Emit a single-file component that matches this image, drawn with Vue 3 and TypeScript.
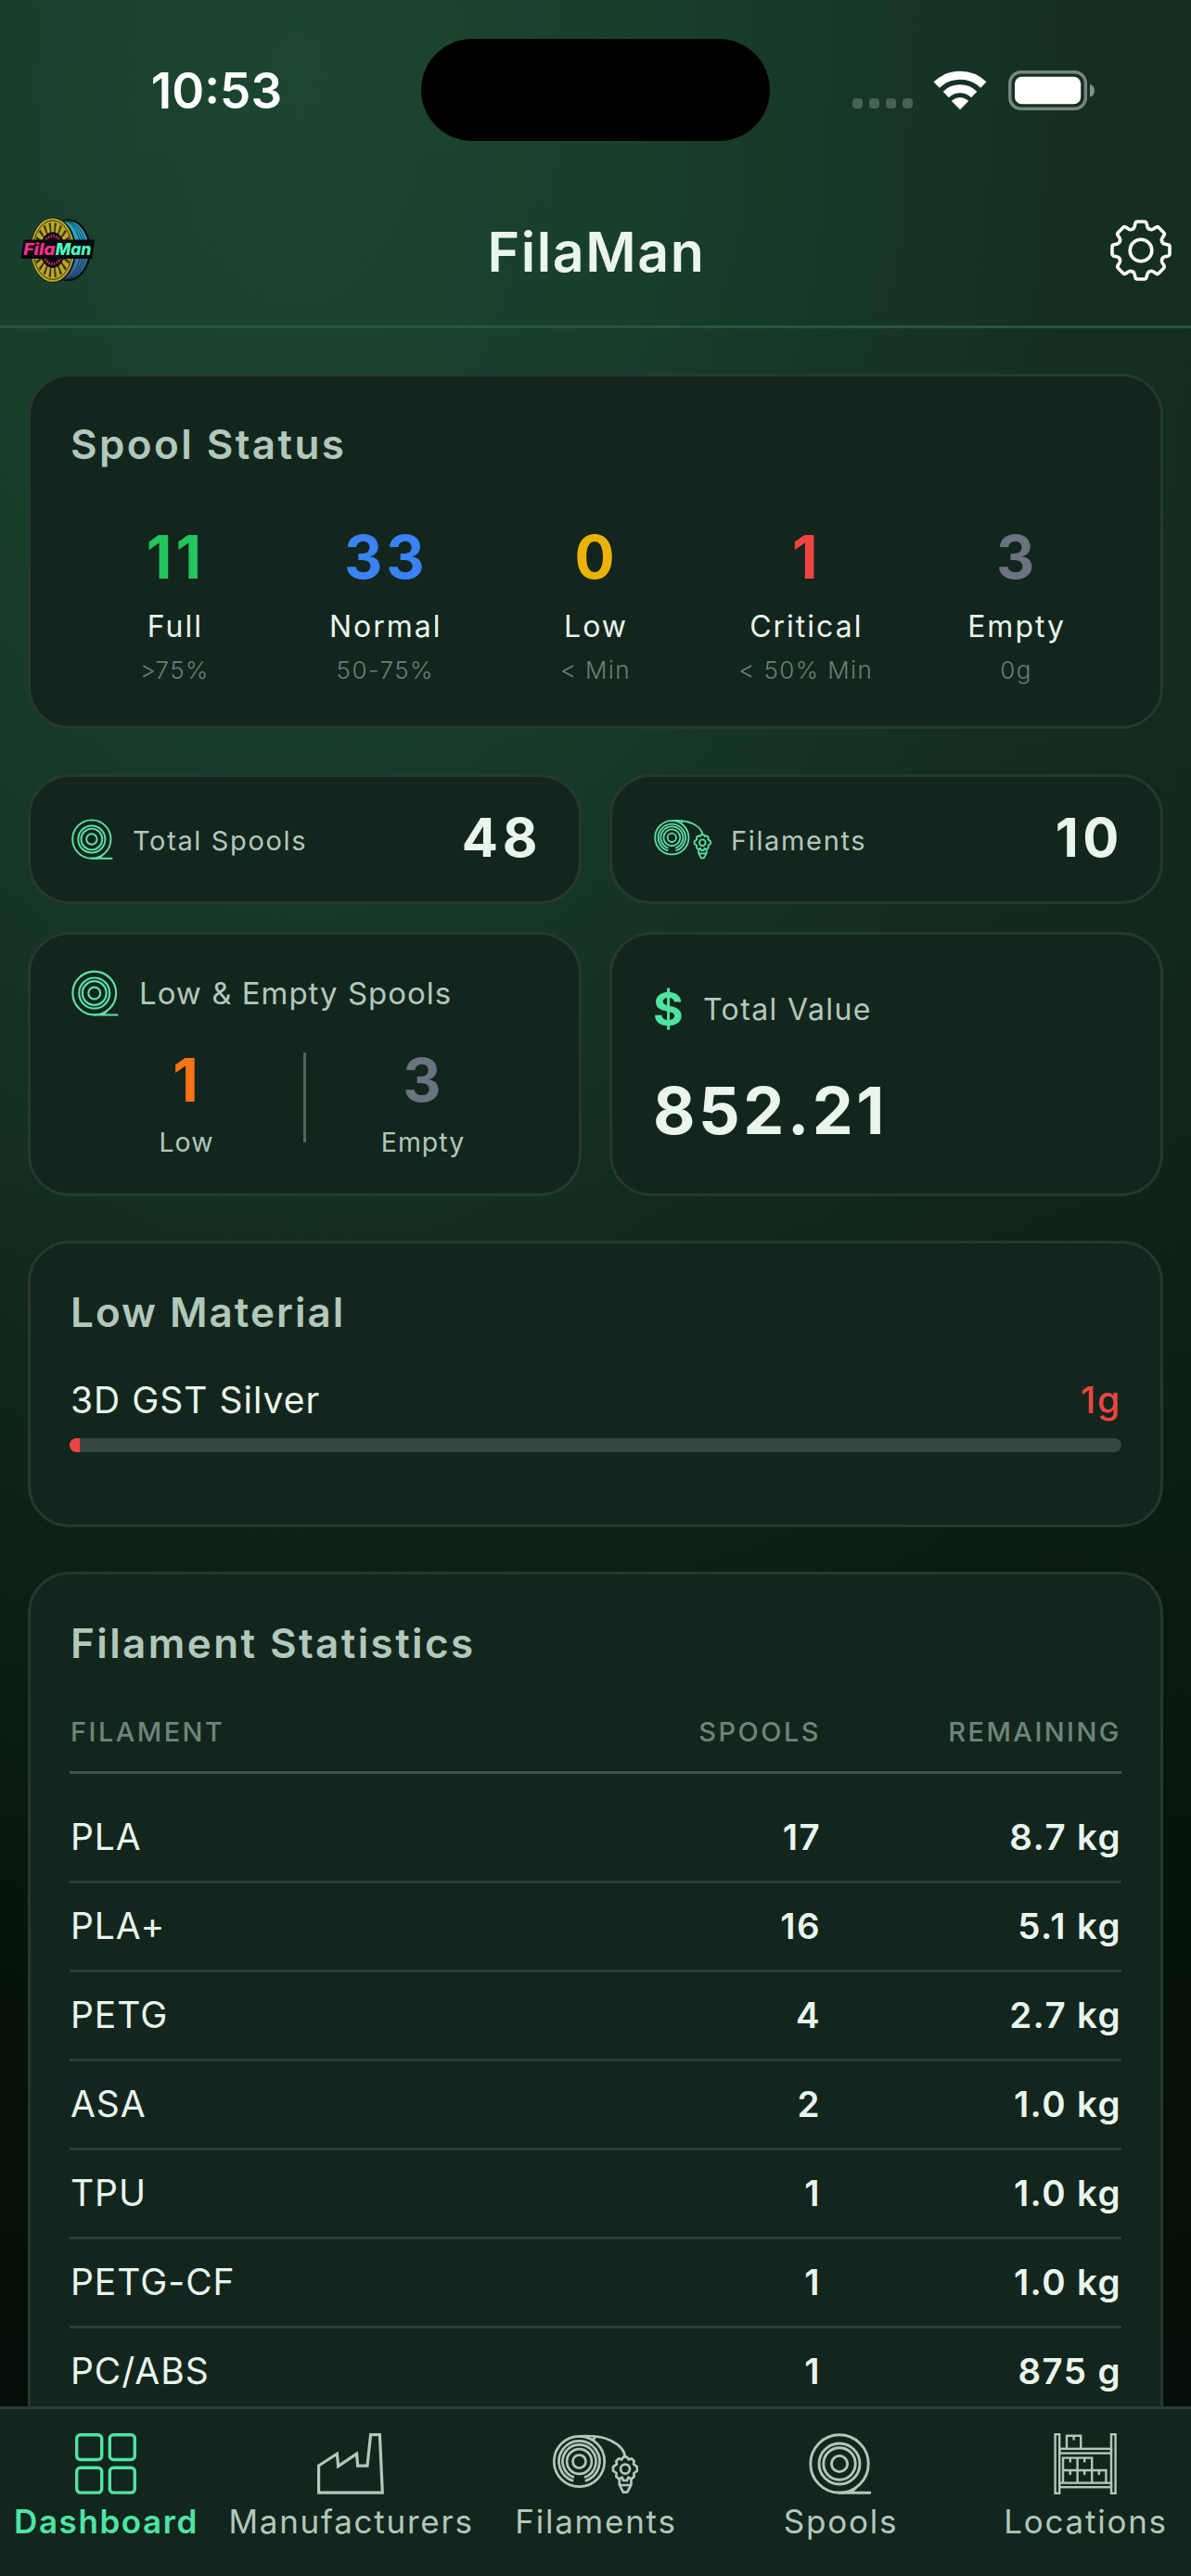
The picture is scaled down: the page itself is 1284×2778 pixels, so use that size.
<script setup lang="ts">
interface Status { value: number; label: string; hint: string; color: string }
interface Row { name: string; spools: number; remaining: string }

const statuses: Status[] = [
  { value: 11, label: 'Full', hint: '>75%', color: '#22c55e' },
  { value: 33, label: 'Normal', hint: '50-75%', color: '#3b82f6' },
  { value: 0, label: 'Low', hint: '< Min', color: '#eab308' },
  { value: 1, label: 'Critical', hint: '< 50% Min', color: '#ef4444' },
  { value: 3, label: 'Empty', hint: '0g', color: '#6b7280' },
]

const rows: Row[] = [
  { name: 'PLA', spools: 17, remaining: '8.7 kg' },
  { name: 'PLA+', spools: 16, remaining: '5.1 kg' },
  { name: 'PETG', spools: 4, remaining: '2.7 kg' },
  { name: 'ASA', spools: 2, remaining: '1.0 kg' },
  { name: 'TPU', spools: 1, remaining: '1.0 kg' },
  { name: 'PETG-CF', spools: 1, remaining: '1.0 kg' },
  { name: 'PC/ABS', spools: 1, remaining: '875 g' },
]

const tabs = [
  { label: 'Dashboard', icon: 'i-grid', w: 66, active: true },
  { label: 'Manufacturers', icon: 'i-factory', w: 72, active: false },
  { label: 'Filaments', icon: 'i-filament', w: 92, active: false },
  { label: 'Spools', icon: 'i-spool', w: 68, active: false },
  { label: 'Locations', icon: 'i-shelf', w: 68, active: false },
]

// Wedge-shaped windows around the spool flange of the logo.
const wedges = Array.from({ length: 20 }, (_, i) => i * 18)
const teeth = Array.from({ length: 8 }, (_, i) => i * 45)
</script>

<template>
  <div class="screen">
    <svg class="defs" width="0" height="0">
      <symbol id="i-grid" viewBox="0 0 66 66">
        <g fill="none" stroke="currentColor" stroke-width="3.4">
          <rect x="1.7" y="1.7" width="27" height="26.8" rx="4" />
          <rect x="37.3" y="1.7" width="27" height="26.8" rx="4" />
          <rect x="1.7" y="37.3" width="27" height="26.8" rx="4" />
          <rect x="37.3" y="37.3" width="27" height="26.8" rx="4" />
        </g>
      </symbol>
      <symbol id="i-factory" viewBox="0 0 72 66">
        <path d="M1.6 35 L21.4 22.2 L22.6 35.6 L42.6 22.2 L43.6 35.2 H54 L57.6 1.7 H67.4 L70.3 64.2 H1.6 Z" fill="none" stroke="currentColor" stroke-width="3.2" />
      </symbol>
      <symbol id="i-filament" viewBox="0 0 92 66">
        <g fill="none" stroke="currentColor" stroke-width="2.7">
          <circle cx="28.5" cy="30.5" r="27.2" />
          <path d="M22.2 51.5 A22 22 0 1 1 34.8 51.5" />
          <path d="M23 47.6 A18 18 0 1 1 34 47.6" />
          <circle cx="28.5" cy="30.5" r="13.4" />
          <circle cx="28.5" cy="30.5" r="7" />
          <path d="M28.5 3.3 C42 2.4 54 3.6 63 8.2 C72 12.6 77.4 18.5 78 26" />
          <path d="M46 4.2 Q44 5.6 43.2 7.4" />
          <circle cx="78" cy="38.6" r="5" />
          <path stroke-linejoin="round" d="M76 25.6 H80 L81.6 28.4 L85 27.4 L87.6 30 L87 33.4 L91 36.4 V40.6 L87.4 43 L87.6 47 L84.6 49.4 L81.4 47.6 L80 51 H76 L74.6 47.6 L71.4 49.4 L68.4 47 L68.6 43 L65 40.6 V36.4 L69 33.4 L68.4 30 L71 27.4 L74.4 28.4 Z" />
          <path stroke-linejoin="round" d="M71.8 49 V56 H84.4 V49 M72 56 L75.8 63.6 H80.2 L84.2 56" />
        </g>
      </symbol>
      <symbol id="i-spool" viewBox="0 0 68 66">
        <g fill="none" stroke="currentColor" stroke-width="2.9">
          <circle cx="33" cy="33" r="31.2" />
          <circle cx="33" cy="33" r="22" />
          <circle cx="33" cy="33" r="17.2" />
          <circle cx="33" cy="33" r="8.6" />
          <path d="M32 64.3 H67 M45 63.6 Q49 61 51 58.4" />
        </g>
      </symbol>
      <symbol id="i-shelf" viewBox="0 0 68 66">
        <g fill="none" stroke="currentColor" stroke-width="2.4">
          <rect x="1.6" y="1.2" width="4.6" height="63.6" />
          <rect x="62" y="1.2" width="4.6" height="63.6" />
          <rect x="6.2" y="16.8" width="55.8" height="4.8" />
          <rect x="6.2" y="53.6" width="55.8" height="4.6" />
          <path d="M14 16.8 V2.8 H29.2 V16.8 M21.6 2.8 V7.4" />
          <path d="M10 53.6 V26.6 H41.2 V53.6 M25.6 26.6 V53.6 M10 40 H56.4 V53.6" />
          <path d="M17.8 26.6 V31.4 M33.2 26.6 V31.4 M17.8 40 V45 M33.2 40 V45 M48.8 40 V45" />
        </g>
      </symbol>
    </svg>

    <div class="statusbar">
      <div class="time">10:53</div>
      <div class="island"></div>
      <div class="indicators">
        <div class="dots"><i></i><i></i><i></i><i></i></div>
        <svg class="wifi" width="58" height="43" viewBox="0 0 58 43">
          <g fill="none" stroke="#fff" stroke-width="9">
            <path d="M3.6 15.6 A36.5 36.5 0 0 1 54.4 15.6" />
            <path d="M13.8 25.9 A22 22 0 0 1 44.2 25.9" />
          </g>
          <path d="M29 42.3 L20.4 33.6 Q19.8 32.6 20.8 31.9 Q29 26.2 37.2 31.9 Q38.2 32.6 37.6 33.6 Z" fill="#fff" />
        </svg>
        <svg class="battery" width="94" height="43" viewBox="0 0 94 43">
          <rect x="1.8" y="1.8" width="81.6" height="39.4" rx="12" fill="none" stroke="#fff" stroke-opacity=".42" stroke-width="3.4" />
          <rect x="7" y="6.8" width="71.2" height="29.4" rx="7.5" fill="#fff" />
          <path d="M88 14.6 A7.6 7.6 0 0 1 88 28.8 Z" fill="#fff" fill-opacity=".48" />
        </svg>
      </div>
    </div>

    <header class="header">
      <svg class="logo" width="82" height="76" viewBox="0 0 82 76">
        <defs>
          <linearGradient id="side" x1="0" y1="0" x2="0" y2="1">
            <stop offset="0" stop-color="#27b3cf" />
            <stop offset=".5" stop-color="#2b8fb4" />
            <stop offset="1" stop-color="#3b4f96" />
          </linearGradient>
        </defs>
        <ellipse cx="51.5" cy="37.6" rx="24.5" ry="33.6" fill="#07110d" />
        <ellipse cx="51" cy="37.6" rx="22.6" ry="31.4" fill="url(#side)" />
        <g fill="none" stroke="#12333f" stroke-width=".9">
          <ellipse cx="48.6" cy="37.6" rx="22" ry="31.5" />
          <ellipse cx="45.8" cy="37.6" rx="22" ry="32" />
          <ellipse cx="43" cy="37.6" rx="22" ry="32.4" />
        </g>
        <ellipse cx="35.4" cy="37.6" rx="24.6" ry="35.4" fill="#0b130c" />
        <ellipse cx="34.8" cy="37.6" rx="23.4" ry="34.4" fill="#b9a62c" />
        <ellipse cx="34.8" cy="37.6" rx="21" ry="31.8" fill="none" stroke="#38350f" stroke-width="1" />
        <g transform="translate(34.8 37.6) scale(.68 1)">
          <path v-for="a in wedges" :key="a" :transform="`rotate(${a + 9})`" d="M-1.7 -29.5 H1.7 L1 -18 H-1 Z" fill="#3a360e" />
        </g>
        <ellipse cx="34.8" cy="37.6" rx="13.6" ry="19.4" fill="#0d0b10" />
        <ellipse cx="34.8" cy="37.6" rx="10.6" ry="15" fill="none" stroke="#c9246f" stroke-width="3" stroke-dasharray="1.6 1.3" />
        <path d="M4.6 27.6 H79 L76.4 46 H1.6 Z" fill="#07090c" stroke="#07090c" stroke-width="2" stroke-linejoin="round" />
        <text x="3.2" y="43" textLength="34.4" lengthAdjust="spacingAndGlyphs" class="logo-text" fill="#ff2f8e">Fila</text>
        <text x="37.8" y="43" textLength="38.6" lengthAdjust="spacingAndGlyphs" class="logo-text" fill="#4dfcc0">Man</text>
      </svg>
      <h1>FilaMan</h1>
      <svg class="gear" width="68" height="68" viewBox="-34 -34 68 68">
        <g fill="none" stroke="#fff" stroke-width="3.6" stroke-linecap="round" stroke-linejoin="round">
          <circle r="11.8" />
          <path
            v-for="a in teeth"
            :key="a"
            :transform="`rotate(${a})`"
            d="M-9.5 -22.8 Q-7.4 -23.4 -7 -25.2 L-5.9 -29.6 Q-5.5 -31 -4 -31 H4 Q5.5 -31 5.9 -29.6 L7 -25.2 Q7.4 -23.4 9.4 -22.84"
          />
        </g>
      </svg>
    </header>

    <main class="content">
      <section class="card status">
        <h2>Spool Status</h2>
        <div class="status-grid">
          <div v-for="s in statuses" :key="s.label" class="status-cell">
            <div class="big" :style="{ color: s.color }">{{ s.value }}</div>
            <div class="label">{{ s.label }}</div>
            <div class="hint">{{ s.hint }}</div>
          </div>
        </div>
      </section>

      <div class="tiles">
        <section class="card tile">
          <svg width="45" height="44"><use href="#i-spool" /></svg>
          <span class="tile-label">Total Spools</span>
          <strong>48</strong>
        </section>
        <section class="card tile filaments">
          <svg width="62" height="44"><use href="#i-filament" /></svg>
          <span class="tile-label">Filaments</span>
          <strong>10</strong>
        </section>
        <section class="card lowempty">
          <div class="le-head">
            <svg width="51" height="50"><use href="#i-spool" /></svg>
            <span>Low &amp; Empty Spools</span>
          </div>
          <div class="le-body">
            <div class="le-cell">
              <div class="big orange">1</div>
              <div class="le-label">Low</div>
            </div>
            <div class="vline"></div>
            <div class="le-cell">
              <div class="big gray">3</div>
              <div class="le-label">Empty</div>
            </div>
          </div>
        </section>
        <section class="card value">
          <div class="v-head"><b>$</b><span>Total Value</span></div>
          <div class="amount">852.21</div>
        </section>
      </div>

      <section class="card lowmat">
        <h2>Low Material</h2>
        <div class="lm-row"><span>3D GST Silver</span><b>1g</b></div>
        <div class="bar"><div class="fill" :style="{ width: '1%' }"></div></div>
      </section>

      <section class="card stats">
        <h2>Filament Statistics</h2>
        <div class="thead">
          <span>FILAMENT</span><span class="num">SPOOLS</span><span class="num">REMAINING</span>
        </div>
        <div v-for="r in rows" :key="r.name" class="trow">
          <span>{{ r.name }}</span><b class="num">{{ r.spools }}</b><b class="num">{{ r.remaining }}</b>
        </div>
      </section>
    </main>

    <nav class="tabbar">
      <div v-for="t in tabs" :key="t.label" class="tab" :class="{ active: t.active }">
        <svg :width="t.w" height="66"><use :href="`#${t.icon}`" /></svg>
        <span>{{ t.label }}</span>
      </div>
    </nav>
  </div>
</template>

<style>
body {
  background: #050d08;
}
</style>

<style scoped>
.screen {
  width: 1284px;
  height: 2778px;
  overflow: hidden;
  display: flex;
  flex-direction: column;
  font-family: Inter, "Liberation Sans", sans-serif;
  color: #eaf5ee;
  background:
    radial-gradient(ellipse 1200px 2150px at 25% 3%, rgba(34, 90, 62, 0.58) 0%, rgba(30, 82, 56, 0.48) 35%, rgba(22, 60, 40, 0.24) 70%, rgba(16, 46, 30, 0) 100%),
    linear-gradient(180deg, #142b1e 0%, #12291c 28%, #10231a 45%, #0b1c12 60%, #06130b 75%, #050d08 100%);
}
.screen * {
  box-sizing: border-box;
}
.screen svg {
  flex: none;
  display: block;
}
.defs {
  position: absolute;
}

.statusbar {
  flex: none;
  height: 194px;
  display: grid;
  grid-template-columns: 454px 376px 454px;
  align-items: center;
}
.time {
  padding: 2px 0 0 13px;
  text-align: center;
  font-size: 53px;
  line-height: 60px;
  font-weight: 600;
  color: #fff;
}
.island {
  height: 110px;
  border-radius: 55px;
  background: #000;
}
.indicators {
  display: flex;
  align-items: center;
  padding-left: 89px;
}
.dots {
  display: flex;
  gap: 7px;
  padding-top: 29px;
}
.dots i {
  width: 11px;
  height: 11px;
  border-radius: 4px;
  background: rgba(255, 255, 255, 0.22);
}
.wifi {
  margin-left: 22px;
}
.battery {
  margin-left: 23px;
}

.header {
  flex: none;
  height: 160px;
  padding: 0 20px 5px 22px;
  border-bottom: 3px solid #26573f;
  display: grid;
  grid-template-columns: 1fr auto 1fr;
  align-items: center;
}
.header h1 {
  margin: 3px 0 0;
  font-size: 59px;
  line-height: 70px;
  font-weight: 600;
  letter-spacing: 1.6px;
}
.gear {
  justify-self: end;
}
.logo-text {
  font: italic 800 17px Inter, sans-serif;
}

.content {
  flex: 1;
  min-height: 0;
  overflow: hidden;
  padding: 49px 30px 0;
}
.card {
  background: #13261d;
  border: 3px solid #26382f;
  border-radius: 45px;
  padding: 0 42px;
}
h2 {
  margin: 0 0 0 1px;
  font-size: 44px;
  line-height: 50px;
  font-weight: 600;
  letter-spacing: 2.4px;
  color: #b1c8bb;
}
.big {
  padding-left: 2px;
  font-size: 64px;
  line-height: 70px;
  font-weight: 700;
  letter-spacing: 4px;
}
.orange {
  color: #f97316;
}
.gray {
  color: #6b7280;
}

.status {
  height: 383px;
  padding-top: 48px;
}
.status-grid {
  margin-top: 62px;
  display: grid;
  grid-template-columns: repeat(5, 1fr);
  text-align: center;
}
.label {
  margin-top: 22px;
  padding-left: 1px;
  font-size: 32px;
  line-height: 36px;
  font-weight: 400;
  letter-spacing: 2px;
}
.hint {
  margin-top: 14px;
  font-size: 26px;
  line-height: 30px;
  font-weight: 350;
  letter-spacing: 1.4px;
  color: #6a7f74;
}

.tiles {
  margin-top: 49px;
  display: grid;
  grid-template-columns: 1fr 1fr;
  grid-template-rows: 140px 285px;
  gap: 30px;
}
.tile {
  display: flex;
  align-items: center;
  padding: 0 40px 0 44px;
}
.filaments {
  padding-left: 45px;
}
.tile-label {
  padding-top: 4px;
  margin-left: 21px;
  flex: 1;
  font-size: 29px;
  line-height: 36px;
  letter-spacing: 1.65px;
  color: #b1c8bb;
}
.tile strong {
  margin-top: -4px;
  font-size: 58px;
  line-height: 64px;
  font-weight: 700;
  letter-spacing: 4.6px;
}
.lowempty {
  padding-top: 37px;
}
.le-head {
  display: flex;
  align-items: center;
  height: 51px;
  gap: 22px;
  padding-left: 2px;
  font-size: 33px;
  line-height: 40px;
  letter-spacing: 1px;
  color: #b1c8bb;
}
.le-body {
  margin-top: 34px;
  display: flex;
}
.le-cell {
  flex: 1;
  text-align: center;
}
.le-label {
  margin-top: 15px;
  font-size: 28.5px;
  line-height: 34px;
  letter-spacing: 1px;
  color: #b1c8bb;
}
.vline {
  width: 3px;
  height: 97px;
  margin-top: 5px;
  background: #55655c;
}
.value {
  padding: 50px 42px 0 44px;
}
.v-head {
  height: 60px;
  display: flex;
  align-items: center;
  font-size: 32px;
  letter-spacing: 1.4px;
  color: #b1c8bb;
}
.v-head b {
  width: 54px;
  font-size: 50px;
  font-weight: 650;
  color: #4fe3a0;
}
.amount {
  margin-top: 40px;
  font-size: 70px;
  line-height: 80px;
  font-weight: 700;
  letter-spacing: 3.5px;
}
.tile > svg,
.le-head > svg {
  color: #5ee0a6;
}

.lowmat {
  margin-top: 48px;
  height: 309px;
  padding-top: 49px;
}
.lowmat h2 {
  letter-spacing: 2px;
}
.lm-row {
  margin: 45px 0 0 1px;
  display: flex;
  justify-content: space-between;
  font-size: 39px;
  line-height: 50px;
  letter-spacing: 1px;
}
.lm-row b {
  font-weight: 550;
  letter-spacing: 1.8px;
  color: #ef4444;
}
.bar {
  margin-top: 16px;
  height: 15px;
  border-radius: 7.5px;
  overflow: hidden;
  background: #37473f;
}
.fill {
  height: 100%;
  background: #ef4444;
}

.stats {
  margin-top: 48px;
  height: 1100px;
  padding-top: 49px;
}
.thead,
.trow {
  display: grid;
  grid-template-columns: 510px 300px 1fr;
  align-items: center;
}
.thead > :first-child,
.trow > :first-child {
  padding-left: 1px;
}
.num {
  text-align: right;
}
.thead {
  margin: 53px 0 22px;
  height: 63px;
  padding-bottom: 24px;
  border-bottom: 3px solid #43544b;
  font-size: 29px;
  line-height: 36px;
  font-weight: 450;
  letter-spacing: 2.45px;
  color: #6f8579;
}
.trow {
  height: 96px;
  border-bottom: 3px solid #2b3d34;
  font-size: 39px;
  line-height: 48px;
  padding-bottom: 1px;
  letter-spacing: 0.95px;
}
.trow b {
  font-weight: 600;
  font-size: 38.5px;
  letter-spacing: 1.4px;
}

.tabbar {
  flex: none;
  height: 183px;
  border-top: 3px solid #2a3b33;
  background: #13261d;
  display: grid;
  grid-template-columns: repeat(5, 264px);
  justify-content: center;
}
.tab {
  padding-top: 26px;
  display: flex;
  flex-direction: column;
  align-items: center;
  color: #b1c8bb;
  font-size: 35px;
  font-weight: 400;
  letter-spacing: 1.75px;
}
.tab span {
  margin: 7px 0 0 1px;
  line-height: 44px;
}
.tab.active {
  color: #4fe3a4;
  font-weight: 600;
  letter-spacing: 1.6px;
}
</style>
